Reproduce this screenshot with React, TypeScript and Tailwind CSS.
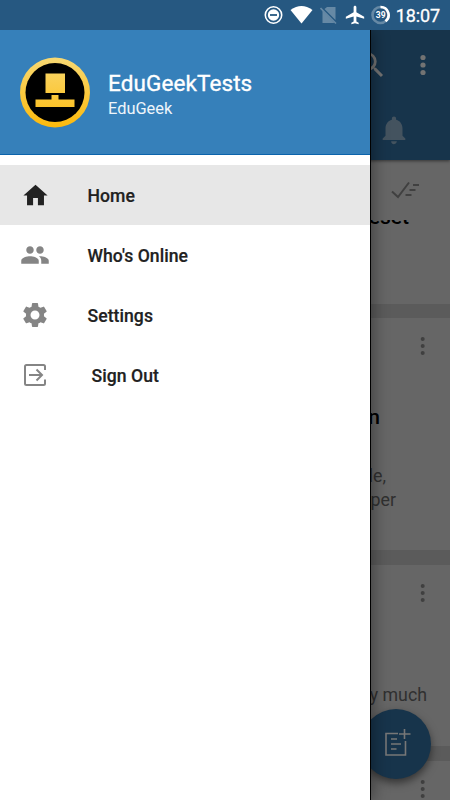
import type { ReactNode } from 'react';
import { MdHome, MdPeople, MdSettings, MdSearch, MdNotifications, MdAirplanemodeActive } from 'react-icons/md';

type MenuItemProps = {
	icon: ReactNode;
	label: string;
	active?: boolean;
	indent?: boolean;
};

function MenuItem({ icon, label, active, indent }: MenuItemProps) {
	return (
		<li
			className={`h-[60px] flex items-center ${active ? 'bg-[#e7e7e7] text-[#222]' : 'text-[#858585]'}`}
		>
			<span className="w-[70px] flex justify-center">{icon}</span>
			<span
				className={`pt-0.5 text-[17.6px] leading-6 font-medium tracking-[0.05px] text-[#212121] [-webkit-text-stroke:0.2px_#212121] ${indent ? 'ml-[21.5px]' : 'ml-[17.5px]'}`}
			>
				{label}
			</span>
		</li>
	);
}

function Dots({ className }: { className: string }) {
	return (
		<svg className={className} width="6" height="20" viewBox="0 0 6 20" fill="currentColor">
			<circle cx="2.7" cy="3" r="2" />
			<circle cx="2.7" cy="10" r="2" />
			<circle cx="2.7" cy="17" r="2" />
		</svg>
	);
}

function SignOutIcon() {
	return (
		<svg width="24" height="24" viewBox="0 0 24 24" fill="none" stroke="currentColor" strokeWidth="2">
			<path d="M22 7V3.5Q22 2 20.5 2H3.5Q2 2 2 3.5V20.5Q2 22 3.5 22H20.5Q22 22 22 20.5V16.5" />
			<path d="M6 12H19M13.5 6.5L19 12L13.5 17.5" />
		</svg>
	);
}

function Logo() {
	return (
		<svg width="70" height="71" viewBox="0 0 70 71">
			<defs>
				<linearGradient id="gold" gradientUnits="userSpaceOnUse" x1="0" y1="0" x2="0" y2="70">
					<stop offset="0" stopColor="#f8d974" />
					<stop offset="1" stopColor="#fdba0c" />
				</linearGradient>
			</defs>
			<circle cx="35" cy="35.5" r="35" fill="url(#gold)" />
			<circle cx="35" cy="35.5" r="29.5" fill="#000" />
			<path d="M25.5 16.5h19.5v19.5h-19.5zM31.5 38h7v4.5h16v7.500h-39v-7.500h16z" fill="url(#gold)" />
		</svg>
	);
}

function StatusBar() {
	return (
		<header className="relative z-20 h-[30px] bg-[#265881] flex items-center justify-end text-white pr-2.5">
			<svg width="19" height="20" viewBox="0 0 19 20" fill="none" stroke="currentColor">
				<circle cx="9.5" cy="10" r="8.2" strokeWidth="1.6" />
				<circle cx="9.5" cy="10" r="5.7" fill="currentColor" stroke="none" />
				<path d="M6 10h7" stroke="#265881" strokeWidth="1.8" />
			</svg>
			<svg className="ml-[7px]" width="24" height="20" viewBox="0 0 24 20" fill="currentColor">
				<path d="M0.5 5Q11.5-3 22.5 5L11.5 18.5Z" />
			</svg>
			<svg className="ml-1.5" width="18" height="20" viewBox="0 0 18 20">
				<path d="M7 2h8.500v13L4.500 4zM2.500 5.500L14.500 18h-12z" fill="#6689a5" />
				<path d="M0.500 3L16 18.500" stroke="#6689a5" strokeWidth="1.6" />
			</svg>
			<MdAirplanemodeActive className="ml-1.5" size={22} />
			<div className="ml-[5px] size-5 relative flex items-center justify-center">
				<svg className="absolute inset-0" width="20" height="20" viewBox="0 0 20 20" fill="none" strokeWidth="2.6">
					<circle cx="9.5" cy="10" r="8" stroke="#6689a5" />
					<path d="M9.5 2A8 8 0 0 1 14.5 16.3" stroke="#fff" />
				</svg>
				<span className="relative text-[8.5px] leading-none font-bold">39</span>
			</div>
			<span className="ml-[5px] text-[18px] leading-6 tracking-[-0.1px] pt-px [-webkit-text-stroke:0.3px_#fff]">18:07</span>
		</header>
	);
}

function Drawer() {
	return (
		<aside className="absolute z-10 left-0 top-[30px] bottom-0 w-[371px] bg-white border-r border-black shadow-[3px_0_14px_rgba(0,0,0,0.35)]">
			<div className="h-[125px] bg-[#3680ba] border-b border-[#0b63ab] flex items-center pl-5 gap-[18px] text-white">
				<Logo />
				<div className="pt-[7px]">
					<p className="text-[22.5px] leading-[26px] tracking-[0.1px] [-webkit-text-stroke:0.35px_#fff]">EduGeekTests</p>
					<p className="text-[16.4px] leading-[25px] text-[#eef5fa]">EduGeek</p>
				</div>
			</div>
			<ul className="pt-2.5">
				<MenuItem icon={<MdHome size={29} />} label="Home" active />
				<MenuItem icon={<MdPeople size={30} />} label="Who's Online" />
				<MenuItem icon={<MdSettings size={30} />} label="Settings" />
				<MenuItem icon={<SignOutIcon />} label="Sign Out" indent />
			</ul>
		</aside>
	);
}

function AppBar() {
	return (
		<div className="relative z-[2] h-[130px] bg-[#17344b] text-[#737373] shadow-[0_1px_3px_rgba(0,0,0,0.5)]">
			<div className="h-[70px] flex items-center justify-end pr-[22.5px]">
				<MdSearch className="mr-[30px]" size={34} />
				<svg width="10" height="22" viewBox="0 0 10 22" fill="currentColor">
					<circle cx="5" cy="3.5" r="2.6" />
					<circle cx="5" cy="11" r="2.6" />
					<circle cx="5" cy="18.5" r="2.6" />
				</svg>
			</div>
			<div className="h-[60px] flex items-center justify-end pr-[39px] text-[#44535f]">
				<MdNotifications size={34} />
			</div>
		</div>
	);
}

function Feed() {
	return (
		<main className="bg-[#5b5b5b] flex flex-col text-right text-[#303030] text-[17.8px] leading-6">
			<section className="h-36 bg-[#666]">
				<div className="relative z-[1] h-[60px] bg-[#666] flex items-center justify-end pr-[30px] text-[#404040]">
					<svg width="29" height="18" viewBox="0 0 29 18" fill="none" stroke="currentColor" strokeWidth="2">
						<path d="M1 10.5L7 16L18 1.5M22 4h6M18.5 9h6M14.5 14h6" />
					</svg>
				</div>
				<p className="-mt-[15px] pr-[41px] text-[21px] leading-6 font-medium text-black">Reset</p>
			</section>
			<section className="mt-3.5 h-[232px] bg-[#666]">
				<Dots className="ml-auto mr-6 translate-y-[18px] text-[#404040]" />
				<p className="pt-[67px] pr-[70px] text-[21px] leading-6 font-medium text-black">in</p>
				<p className="pt-[35px] pr-16">le,</p>
				<p className="pr-[54px]">per</p>
			</section>
			<section className="mt-[15px] h-[181px] bg-[#666]">
				<Dots className="ml-auto mr-6 translate-y-[18px] text-[#404040]" />
				<p className="pt-[98px] pr-[23px]">very much</p>
			</section>
			<section className="mt-[15px] h-[39px] bg-[#666]">
				<Dots className="ml-auto mr-6 translate-y-[18px] text-[#404040]" />
			</section>
		</main>
	);
}

function ComposeButton() {
	return (
		<button className="absolute right-[19px] bottom-[21px] size-[70px] rounded-full bg-[#17344b] text-[#777] flex items-center justify-center shadow-[0_4px_8px_rgba(0,0,0,0.5)]">
			<svg className="ml-[3px] mb-1" width="26" height="28" viewBox="0 0 26 28" fill="none" stroke="currentColor" strokeWidth="1.6">
				<path d="M13 5.5H1V27H20.5V13M19.5 1V11M14 6H25.5" />
				<path d="M6 11H12M6 16H16M6 21H11.5" />
			</svg>
		</button>
	);
}

export default function App() {
	return (
		<div className="relative w-[450px] h-[800px] overflow-hidden font-[Roboto,sans-serif]">
			<StatusBar />
			<AppBar />
			<Feed />
			<ComposeButton />
			<Drawer />
		</div>
	);
}
